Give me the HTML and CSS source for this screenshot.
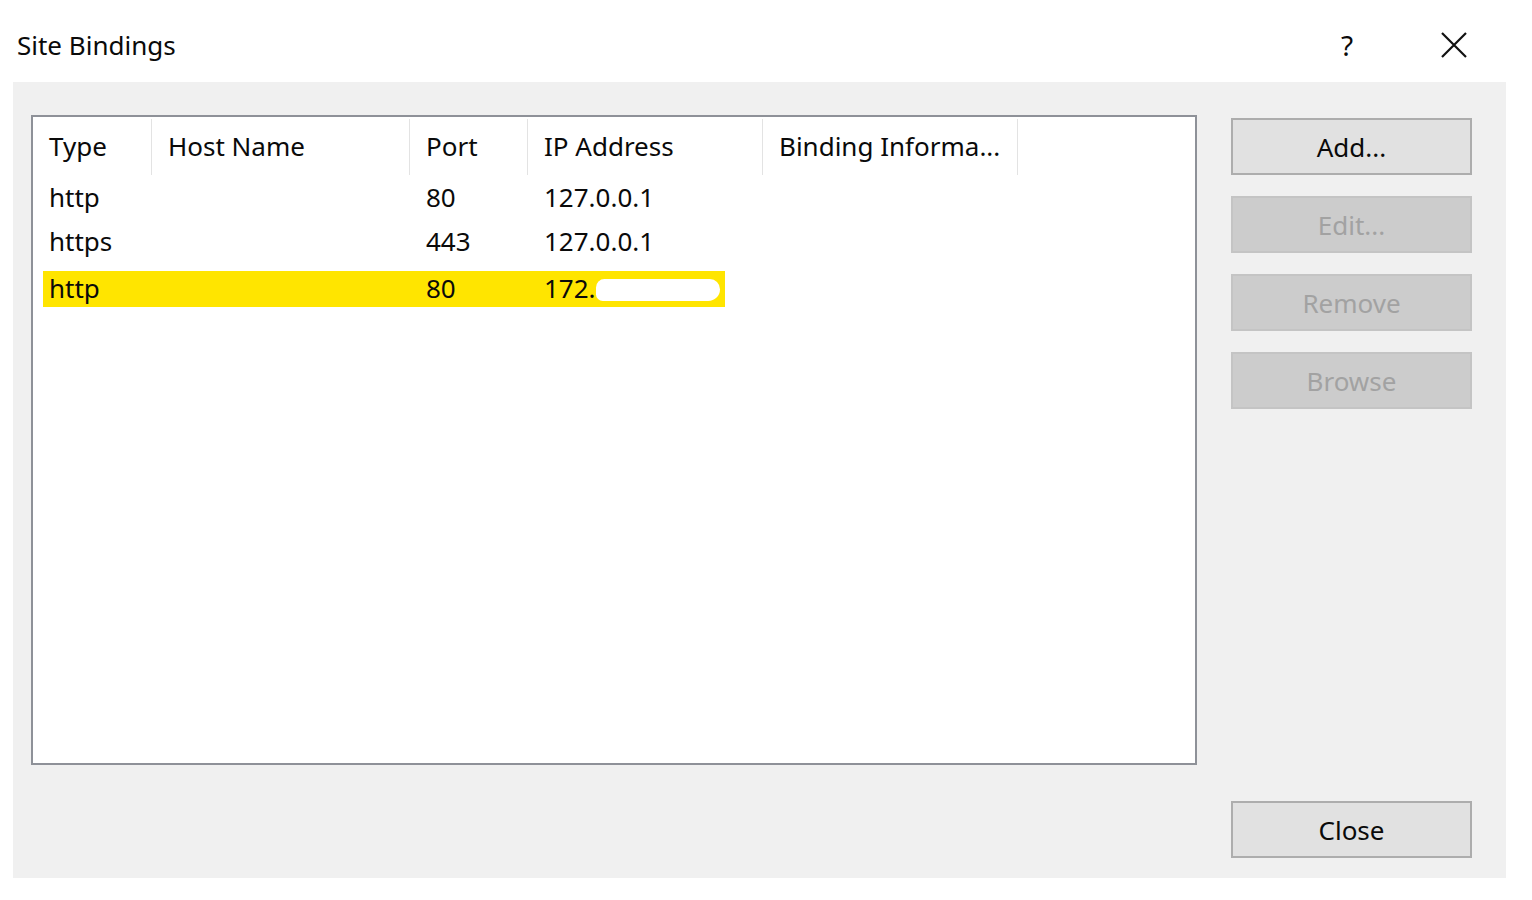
FILE: index.html
```html
<!DOCTYPE html>
<html lang="en">
<head>
    <meta charset="UTF-8">
    <meta name="viewport" content="width=device-width, initial-scale=1.0">
    <title>Site Bindings</title>
    <link rel="stylesheet" href="styles.css">
</head>
<body>
    <div class="titlebar">
        <span class="title">Site Bindings</span>
        <span class="help">?</span>
        <span class="close-x">
            <svg width="26" height="26" viewBox="0 0 26 26">
                <path d="M1 1 L25 25 M25 1 L1 25" stroke="#111" stroke-width="2.2" fill="none"/>
            </svg>
        </span>
    </div>

    <div class="panel">
        <div class="listbox">
            <div class="row header">
                <div class="cell c1">Type</div>
                <div class="cell c2">Host Name</div>
                <div class="cell c3">Port</div>
                <div class="cell c4">IP Address</div>
                <div class="cell c5">Binding Informa...</div>
            </div>
            <div class="row">
                <div class="cell c1">http</div>
                <div class="cell c2"></div>
                <div class="cell c3">80</div>
                <div class="cell c4">127.0.0.1</div>
            </div>
            <div class="row">
                <div class="cell c1">https</div>
                <div class="cell c2"></div>
                <div class="cell c3">443</div>
                <div class="cell c4">127.0.0.1</div>
            </div>
            <div class="row marked">
                <div class="cell c1">http</div>
                <div class="cell c2"></div>
                <div class="cell c3">80</div>
                <div class="cell c4">172.<span class="blot"></span></div>
            </div>
        </div>

        <div class="side">
            <div class="buttons">
                <button type="button" class="btn">Add...</button>
                <button type="button" class="btn" disabled>Edit...</button>
                <button type="button" class="btn" disabled>Remove</button>
                <button type="button" class="btn" disabled>Browse</button>
            </div>
            <button type="button" class="btn">Close</button>
        </div>
    </div>
</body>
</html>
```

FILE: styles.css
```css
body {
    margin: 0;
    background: #ffffff;
    font-family: "Noto Sans", "Open Sans", sans-serif;
    color: #0a0a0a;
}
.titlebar {
    height: 82px;
    display: flex;
    align-items: center;
    padding: 8px 0 0 17px;
    box-sizing: border-box;
    width: 1506px;
}
.title {
    font-size: 26px;
    flex: 1;
}
.help {
    font-size: 28px;
    width: 15px;
    margin-right: 85px;
}
.close-x {
    display: flex;
    margin-right: 39px;
}
.panel {
    margin-left: 13px;
    width: 1493px;
    height: 796px;
    background: #f0f0f0;
    display: flex;
    padding: 33px 0 20px 18px;
    box-sizing: border-box;
    gap: 34px;
}
.listbox {
    width: 1166px;
    height: 650px;
    background: #fff;
    border: 2px solid #8e9198;
    box-sizing: border-box;
    font-size: 26px;
}
.row {
    display: flex;
    height: 44px;
    line-height: 44px;
}
.row.header {
    height: 58px;
    line-height: 58px;
}
.cell {
    padding-left: 16px;
    box-sizing: border-box;
    white-space: nowrap;
}
.header .cell {
    border-right: 1px solid #e3e3e3;
    height: 56px;
    margin-top: 2px;
    line-height: 54px;
}
.c1 { width: 119px; }
.c2 { width: 258px; }
.c3 { width: 118px; }
.c4 { width: 235px; }
.c5 { width: 255px; }
.row.marked {
    margin-top: 8px;
    height: 36px;
    line-height: 34px;
    background: linear-gradient(to right, transparent 10px, #ffe500 10px, #ffe500 692px, transparent 692px);
}
.blot {
    display: inline-block;
    width: 124px;
    height: 22px;
    background: #fff;
    border-radius: 10px 12px 14px 8px;
    vertical-align: -3px;
    margin-left: 0;
}
.side {
    display: flex;
    flex-direction: column;
    justify-content: space-between;
    width: 241px;
    padding-top: 3px;
}
.buttons {
    display: flex;
    flex-direction: column;
    gap: 21px;
}
.btn {
    width: 241px;
    height: 57px;
    font-family: "Noto Sans", "Open Sans", sans-serif;
    font-size: 26px;
    color: #0a0a0a;
    background: #e1e1e1;
    border: 2px solid #adadad;
    padding: 0;
}
.btn:disabled {
    background: #cccccc;
    border-color: #c4c4c4;
    color: #a2a2a2;
}
```
